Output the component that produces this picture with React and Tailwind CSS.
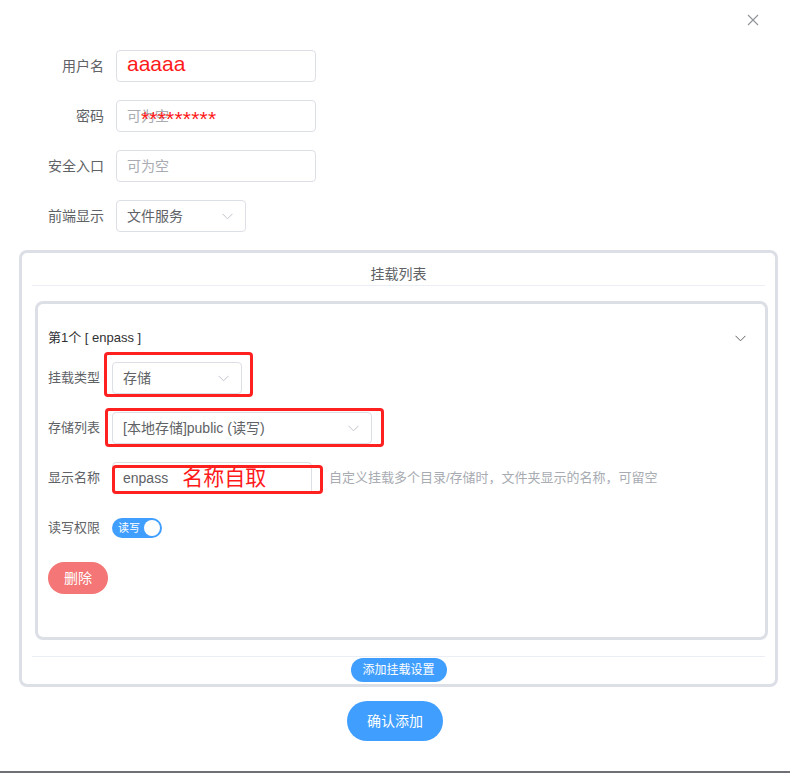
import React from "react";

function Chevron({ className = "", color = "#c0c4cc" }) {
  return (
    <svg width="11" height="7" viewBox="0 0 11 7" className={className} fill="none">
      <path d="M0.5 0.8 L5.5 5.8 L10.5 0.8" stroke={color} strokeWidth="1" />
    </svg>
  );
}

function TopRow({ label, children }) {
  return (
    <div className="flex items-center h-[32px]">
      <div className="w-[116px] shrink-0 pr-[12px] text-right text-[14px] text-[#606266] leading-[32px]">{label}</div>
      {children}
    </div>
  );
}

function Row({ label, children }) {
  return (
    <div className="flex items-center h-[32px]">
      <div className="w-[64px] shrink-0 text-[13px] text-[#606266] leading-[32px]">{label}</div>
      {children}
    </div>
  );
}

function Mark({ className }) {
  return <div className={"absolute border-[3px] border-[#ff2020] rounded-[4px] pointer-events-none " + className} />;
}

export default function App() {
  return (
    <div className="w-[790px] h-[773px] bg-white flex flex-col font-[Liberation_Sans,Noto_Sans_CJK_SC,sans-serif]">
      {/* header */}
      <div className="flex justify-end pt-[14px] pr-[31px]">
        <svg width="12" height="12" viewBox="0 0 12 12" fill="none">
          <path d="M1 1 L11 11 M11 1 L1 11" stroke="#909399" strokeWidth="1.1" />
        </svg>
      </div>

      {/* top form */}
      <div className="mt-[24px] flex flex-col gap-[18px]">
        <TopRow label="用户名">
          <div className="w-[200px] h-[32px] border border-[#dcdfe6] rounded-[4px] px-[10px] flex items-center">
            <span className="text-[21px] text-[#ff1a1a] leading-[24px] -mt-[5px]">aaaaa</span>
          </div>
        </TopRow>
        <TopRow label="密码">
          <div className="relative w-[200px] h-[32px] border border-[#dcdfe6] rounded-[4px] px-[10px] flex items-center">
            <span className="text-[14px] text-[#a8abb2]">可为空</span>
            <span className="absolute left-[24px] top-[6px] text-[21px] text-[#ff1a1a] leading-[24px] tracking-[0.2px]">*********</span>
          </div>
        </TopRow>
        <TopRow label="安全入口">
          <div className="w-[200px] h-[32px] border border-[#dcdfe6] rounded-[4px] px-[10px] flex items-center">
            <span className="text-[14px] text-[#a8abb2]">可为空</span>
          </div>
        </TopRow>
        <TopRow label="前端显示">
          <div className="w-[130px] h-[32px] border border-[#dcdfe6] rounded-[4px] pl-[10px] pr-[12px] flex items-center justify-between">
            <span className="text-[14px] text-[#606266]">文件服务</span>
            <Chevron />
          </div>
        </TopRow>
      </div>

      {/* mount list */}
      <div className="mt-[18px] ml-[19px] mr-[12px] border-[3px] border-[#dcdfe6] rounded-[8px] pb-[2px]">
        <div className="mx-[10px] pt-[11px] pb-[1px] border-b border-[#ebeef5] text-center text-[14px] leading-[20px] text-[#606266]">
          挂载列表
        </div>

        <div className="mt-[15px] ml-[13px] mr-[7px] border-[3px] border-[#dcdfe6] rounded-[8px] pt-[24px] pb-[43px] pl-[10px] pr-[19px]">
          <div className="flex items-center justify-between h-[20px]">
            <span className="text-[13px] text-[#303133] leading-[20px]">第1个 [ enpass ]</span>
            <Chevron color="#606266" />
          </div>

          <div className="mt-[14px] flex flex-col gap-[18px]">
            <Row label="挂载类型">
              <div className="relative w-[130px] h-[32px] border border-[#dcdfe6] rounded-[4px] pl-[10px] pr-[12px] flex items-center justify-between">
                <span className="text-[14px] text-[#606266]">存储</span>
                <Chevron />
                <Mark className="-left-[9px] -right-[12px] -top-[11px] -bottom-[4px]" />
              </div>
            </Row>
            <Row label="存储列表">
              <div className="relative w-[260px] h-[32px] border border-[#dcdfe6] rounded-[4px] pl-[10px] pr-[12px] flex items-center justify-between">
                <span className="text-[14px] text-[#606266]">[本地存储]public (读写)</span>
                <Chevron />
                <Mark className="-left-[8px] -right-[13px] -top-[5px] -bottom-[4px]" />
              </div>
            </Row>
            <Row label="显示名称">
              <div className="relative w-[200px] h-[32px] border border-[#dcdfe6] rounded-[4px] pl-[10px] flex items-center">
                <span className="text-[14px] text-[#606266]">enpass</span>
                <span className="ml-[14px] text-[21px] leading-[24px] text-[#ff1a1a]">名称自取</span>
                <Mark className="left-[-1px] -right-[12px] top-[2px] -bottom-[1px]" />
              </div>
              <span className="ml-[17px] text-[13px] text-[#a8abb2]">自定义挂载多个目录/存储时，文件夹显示的名称，可留空</span>
            </Row>
            <Row label="读写权限">
              <div className="w-[50px] h-[20px] rounded-full bg-[#409eff] flex items-center justify-between pl-[6px] pr-[2px]">
                <span className="text-[11px] text-white leading-[20px]">读写</span>
                <span className="w-[16px] h-[16px] rounded-full bg-white" />
              </div>
            </Row>
            <div className="h-[32px] flex items-center">
              <button className="w-[60px] h-[32px] rounded-full bg-[#f47676] text-white text-[14px] leading-[32px]">删除</button>
            </div>
          </div>
        </div>

        <div className="mt-[16px] mx-[10px] border-t border-[#ebeef5]" />
        <div className="flex justify-center pt-[1px]">
          <button className="w-[96px] h-[24px] rounded-full bg-[#409eff] text-white text-[12px] leading-[24px]">添加挂载设置</button>
        </div>
      </div>

      <div className="mt-[14px] flex justify-center">
        <button className="w-[96px] h-[40px] rounded-full bg-[#409eff] text-white text-[14px] leading-[40px]">确认添加</button>
      </div>

      <div className="mt-auto h-[2px] bg-[#6e7075]" />
    </div>
  );
}
